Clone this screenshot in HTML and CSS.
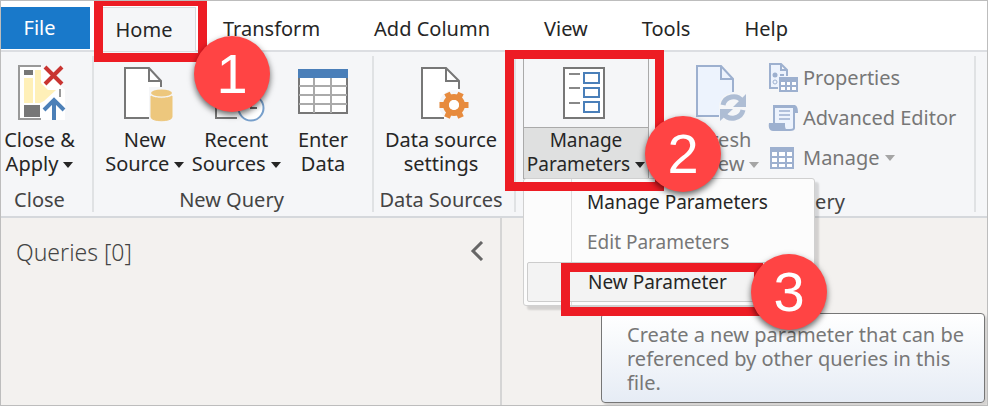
FILE: index.html
```html
<!DOCTYPE html>
<html lang="en">
<head>
<meta charset="utf-8">
<title>Power Query Editor</title>
<link rel="stylesheet" href="styles.css">
</head>
<body>
<div class="window">
  <nav class="tabs">
    <button class="tab tab-file">File</button>
    <div class="tab-wrap">
      <button class="tab tab-active">Home</button>
      <span class="frame frame-home"></span>
      <span class="badge badge-home">1</span>
    </div>
    <button class="tab">Transform</button>
    <button class="tab">Add Column</button>
    <button class="tab">View</button>
    <button class="tab">Tools</button>
    <button class="tab">Help</button>
  </nav>

  <div class="ribbon">
    <section class="group group-close">
      <div class="tools">
        <button class="big">
          <svg class="icon" viewBox="-3 0 52 58"><path d="M2 2H24L48 26V56H2z" fill="#fff"/><path d="M24 2H2V55H24M43 25v8" fill="none" stroke="#999" stroke-width="2"/><path d="M7 6h9v5H7zM7 41h16v12H7z" fill="#777"/><path d="M7 14h9v25H7zM18 6h6v13l7 7h8L27 37l-4 2h-5z" fill="#fff0b8"/><path d="M28 3L45 20M45 3L28 20" stroke="#c93431" stroke-width="4"/><path d="M37 56V37M27 46L37 36L47 46" fill="none" stroke="#4c80b8" stroke-width="4"/></svg>
          <span>Close &amp;<br>Apply<i class="caret"></i></span>
        </button>
      </div>
      <div class="group-name">Close</div>
    </section>

    <section class="group group-new">
      <div class="tools">
        <button class="big">
          <svg class="icon" viewBox="-4 0 52 58"><path d="M2 4h24l11 13v36H2z" fill="#fff"/><path d="M26 54H2V4h24l12 13v6M26 4v13h12" fill="none" stroke="#777" stroke-width="2"/><path d="M26 23h25v35H26z" fill="#f5f6f8"/><path d="M28 32v21c0 5 21 5 21 0V32c-4 3-17 3-21 0z" fill="#edc77d" stroke="#edc77d"/><ellipse cx="38.500" cy="29" rx="10.500" ry="3.500" fill="#edc77d"/></svg>
          <span>New<br>Source<i class="caret"></i></span>
        </button>
        <button class="big">
          <svg class="icon" viewBox="0 0 52 58"><path d="M27 54H6V4h24l11 13v6M30 4v13h11" fill="#fff" stroke="#777" stroke-width="2"/><circle cx="41" cy="44" r="12.500" fill="#fff" stroke="#779fcb" stroke-width="2"/><path d="M41 35v9h6" fill="none" stroke="#666" stroke-width="2"/></svg>
          <span>Recent<br>Sources<i class="caret"></i></span>
        </button>
        <button class="big big-narrow">
          <svg class="icon" viewBox="0 0 52 58"><path d="M2 6h48v43H2z" fill="#fff" stroke="#777" stroke-width="2"/><path d="M17 14v35M34 14v35M2 22h48M2 31h48M2 40h48" stroke="#aaa" stroke-width="2"/><path d="M1 5h50v9H1z" fill="#4a7fb9"/></svg>
          <span>Enter<br>Data</span>
        </button>
      </div>
      <div class="group-name">New Query</div>
    </section>

    <section class="group group-data">
      <div class="tools">
        <button class="big">
          <svg class="icon" viewBox="-5 0 52 58"><path d="M2 4h24l13 13v37H2z" fill="#fff"/><path d="M24 54H2V4h24l13 13v8M26 4v13h13" fill="none" stroke="#777" stroke-width="2"/><circle cx="34" cy="41" r="15" fill="#f5f6f8"/><g stroke="#e78b3e" fill="none"><circle cx="34" cy="41" r="8" stroke-width="6"/><path d="M19.500 41h5M43.500 41h5M27 29l2 4M39 49l2 4.500M41 29l-2 4M29 49l-2 4.500" stroke-width="6"/></g><circle cx="34" cy="41" r="5" fill="#fff"/></svg>
          <span>Data source<br>settings</span>
        </button>
      </div>
      <div class="group-name">Data Sources</div>
    </section>

    <section class="group group-params">
      <div class="dropdown">
        <button class="big split" aria-expanded="true">
          <svg class="icon" viewBox="2 0 52 58"><path d="M6 4h40v50H6z" fill="#fff" stroke="#777" stroke-width="2"/><path d="M11 10h11M11 24h11M11 39h11" stroke="#888" stroke-width="2"/><path d="M26 9h15v10H26zM26 24h15v9H26zM26 38h15v10H26z" fill="#fff" stroke="#4a7fb9" stroke-width="2"/></svg>
          <span class="split-label">Manage<br>Parameters<i class="caret"></i></span>
        </button>
        <div class="menu">
          <button class="item">Manage Parameters</button>
          <button class="item" disabled>Edit Parameters</button>
          <div class="item-wrap">
            <button class="item item-hover">New Parameter</button>
            <div class="tooltip">Create a new parameter that can be referenced by other queries in this file.</div>
            <span class="frame frame-new"></span>
            <span class="badge badge-new">3</span>
          </div>
        </div>
        <span class="frame frame-manage"></span>
        <span class="badge badge-manage">2</span>
      </div>
    </section>

    <section class="group group-query">
      <div class="tools">
        <button class="big" disabled>
          <svg class="icon" viewBox="-5 0 52 58"><path d="M2 2h24l12 13v37H2z" fill="#edf3fd"/><path d="M24 52H2V2h24l12 13v13M26 2v13h12" fill="none" stroke="#9db0cf" stroke-width="2"/><circle cx="38" cy="43" r="14" fill="#f5f6f8"/><path d="M28 41c2-9 14-11 19-4M48 46c-2 9-14 11-19 4" fill="none" stroke="#aebdd4" stroke-width="5"/><path d="M51 30v13H38zM25 57V45h13z" fill="#aebdd4"/></svg>
          <span>Refresh<br>Preview<i class="caret"></i></span>
        </button>
        <div class="small-list">
          <button class="small" disabled><svg class="small-icon" viewBox="0 0 30 30"><path d="M10 25H2V1h11l6 6v6M13 1v6h6" fill="#edf3fd" stroke="#9db0cf" stroke-width="2"/><circle cx="7" cy="12" r="2.500" fill="#9db0cf"/><circle cx="7" cy="19" r="2" fill="none" stroke="#9db0cf"/><path d="M12 12h4" stroke="#9db0cf" stroke-width="2"/><path d="M12 15h17v13H12z" fill="#fff" stroke="#9db0cf" stroke-width="2"/><path d="M11 14h19v5H11z" fill="#9db0cf"/><path d="M18 18v10M23 18v10M12 23h17" stroke="#9db0cf" stroke-width="2"/></svg>Properties</button>
          <button class="small" disabled><svg class="small-icon" viewBox="0 0 30 30"><path d="M6 20V3h20v22c0 2-2 2-4 2H12z" fill="#edf3fd" stroke="#9db0cf" stroke-width="2"/><path d="M5 2h21c3 0 4 3 4 8h-4V5H5zM1 20h16v3c0 2 1 3 2 5H5c-3 0-5-3-4-8z" fill="#9db0cf"/><path d="M11 8h11M11 12h11M11 16h11" stroke="#9db0cf" stroke-width="1.500"/></svg>Advanced Editor</button>
          <button class="small" disabled><svg class="small-icon" viewBox="0 0 30 30"><path d="M3 5h22v20H3z" fill="#fff" stroke="#9db0cf" stroke-width="2"/><path d="M2 4h24v5H2z" fill="#9db0cf"/><path d="M10 8v17M18 8v17M3 14h22M3 20h22" stroke="#9db0cf" stroke-width="2"/></svg>Manage<i class="caret"></i></button>
        </div>
      </div>
      <div class="group-name">Query</div>
    </section>
  </div>

  <main class="workspace">
    <aside class="queries">
      <h1 class="queries-title">Queries [0]</h1>
      <button class="collapse" aria-label="Collapse"><svg class="chevron" viewBox="0 0 14 20"><path d="M12 1L3 10l9 9" fill="none" stroke="#666" stroke-width="3"/></svg></button>
    </aside>
  </main>
</div>
</body>
</html>
```
FILE: styles.css
```css
* { box-sizing: border-box; }

body {
  margin: 0;
  font-family: "Noto Sans", "Open Sans", sans-serif;
  font-size: 20px;
  line-height: 24px;
  color: #262626;
}

button {
  margin: 0;
  padding: 0;
  border: 0;
  background: none;
  font: inherit;
  color: inherit;
}

button:disabled { color: #777; }

.window {
  display: flex;
  flex-direction: column;
  min-height: 100vh;
  overflow: hidden;
  border: 1px solid #bdbdbd;
  background: #fff;
}

.tabs {
  display: flex;
  height: 49px;
  padding-top: 6px;
}

.tab {
  height: 44px;
  padding: 0 27px;
}

.tab-file {
  width: 89px;
  height: 42px;
  padding: 0 12px 0 0;
  background: #1979ca;
  color: #fff;
}

.tab-wrap {
  position: relative;
  margin-left: 12px;
}

.tab-active {
  width: 94px;
  padding: 0 10px 0 0;
  border: 1px solid #d8dadd;
  border-bottom: 0;
  background: #f5f6f8;
}

.ribbon {
  display: flex;
  height: 168px;
  padding-top: 4px;
  border-top: 2px solid #dcdee2;
  border-bottom: 2px solid #d5d8dc;
  background: #f5f6f8;
}

.group {
  position: relative;
  display: flex;
  flex-direction: column;
  height: 156px;
  border-right: 2px solid #e0e2e4;
}

.group-close { width: 93px; padding-right: 14px; }
.group-new { width: 280px; padding: 0 8px 0 5px; }
.group-data { width: 142px; padding-right: 6px; }
.group-params { width: 142px; padding-left: 7px; border-right: 0; }
.group-query { width: 318px; }

.tools { display: flex; }

.big {
  flex: 1;
  display: flex;
  flex-direction: column;
  align-items: center;
  padding-top: 8px;
  white-space: nowrap;
}

.big-narrow { flex: 0 0 82px; }

.icon {
  width: 52px;
  height: 58px;
  margin-bottom: 6px;
  overflow: visible;
}

.caret {
  display: inline-block;
  margin-left: 5px;
  border: 5px solid transparent;
  border-top: 6px solid currentColor;
  border-bottom: 0;
  vertical-align: 3px;
}

:disabled .caret { color: #a5a5a5; }

.group-name {
  margin-top: 12px;
  text-align: center;
  color: #444;
  white-space: nowrap;
}

.dropdown {
  position: relative;
  width: 126px;
  font-size: 19px;
}

.split {
  width: 100%;
  padding-top: 7px;
  border: 1px solid #aaa;
}

.split-label {
  width: 100%;
  padding-bottom: 2px;
  border-top: 1px solid #aaa;
  background: #dfe0e0;
}

.split .icon { margin-bottom: 5px; }

.group-query .tools { padding-left: 5px; }
.group-query .big { flex: 0 0 105px; }

.small-list { padding: 2px 0 0; }

.small {
  display: flex;
  align-items: center;
  height: 40px;
  white-space: nowrap;
}

.small-icon {
  width: 30px;
  height: 30px;
  margin-right: 5px;
}

.menu {
  position: absolute;
  z-index: 2;
  top: 122px;
  left: 0;
  width: 292px;
  padding: 3px;
  border: 1px solid #d0d0d0;
  border-radius: 3px;
  background: linear-gradient(90deg, #fcfcfc 47px, #dedede 47px, #dedede 48px, #fcfcfc 48px);
  box-shadow: 4px 4px 2px #0002;
}

.item {
  display: block;
  width: 100%;
  height: 40px;
  padding-left: 60px;
  text-align: left;
}

.item-wrap { position: relative; }

.item-hover {
  border: 1px solid #ccc;
  border-radius: 2px;
  background: #f3f3f3;
}

.tooltip {
  position: absolute;
  top: 51px;
  left: 74px;
  width: 384px;
  padding: 9px 20px 7px 25px;
  border: 1px solid #767676;
  border-radius: 4px;
  background: linear-gradient(#fff, #e6ecf5);
  box-shadow: 3px 3px 3px #0002;
  font-size: 20px;
  color: #777;
}

.frame {
  position: absolute;
  z-index: 3;
  border: 9px solid #ed1c24;
}

.frame-home {
  top: -10px;
  left: -8px;
  width: 113px;
  height: 65px;
}

.frame-manage {
  top: -6px;
  left: -18px;
  width: 159px;
  height: 141px;
}

.frame-new {
  top: 1px;
  left: 34px;
  width: 202px;
  height: 53px;
}

.badge {
  position: absolute;
  z-index: 4;
  width: 76px;
  height: 76px;
  border-radius: 50%;
  background: #ff4444;
  box-shadow: 0 3px 6px #0009;
  color: #fff;
  font: 56px/76px "Liberation Sans", sans-serif;
  text-align: center;
}

.badge-home { top: 29px; left: 92px; }
.badge-manage { top: 60px; left: 122px; }
.badge-new { top: -8px; left: 224px; }

.workspace {
  flex: 1;
  display: flex;
  background: #f3f1ef;
}

.queries {
  display: flex;
  flex: 0 0 501px;
  justify-content: space-between;
  align-items: flex-start;
  padding: 18px 16px 0 15px;
  border-right: 2px solid #d5d5d5;
}

.queries-title {
  margin: 0;
  font-size: 23px;
  font-weight: 300;
  line-height: 32px;
  color: #444;
}

.collapse { padding-top: 5px; }

.chevron {
  display: block;
  width: 14px;
  height: 20px;
}
```
